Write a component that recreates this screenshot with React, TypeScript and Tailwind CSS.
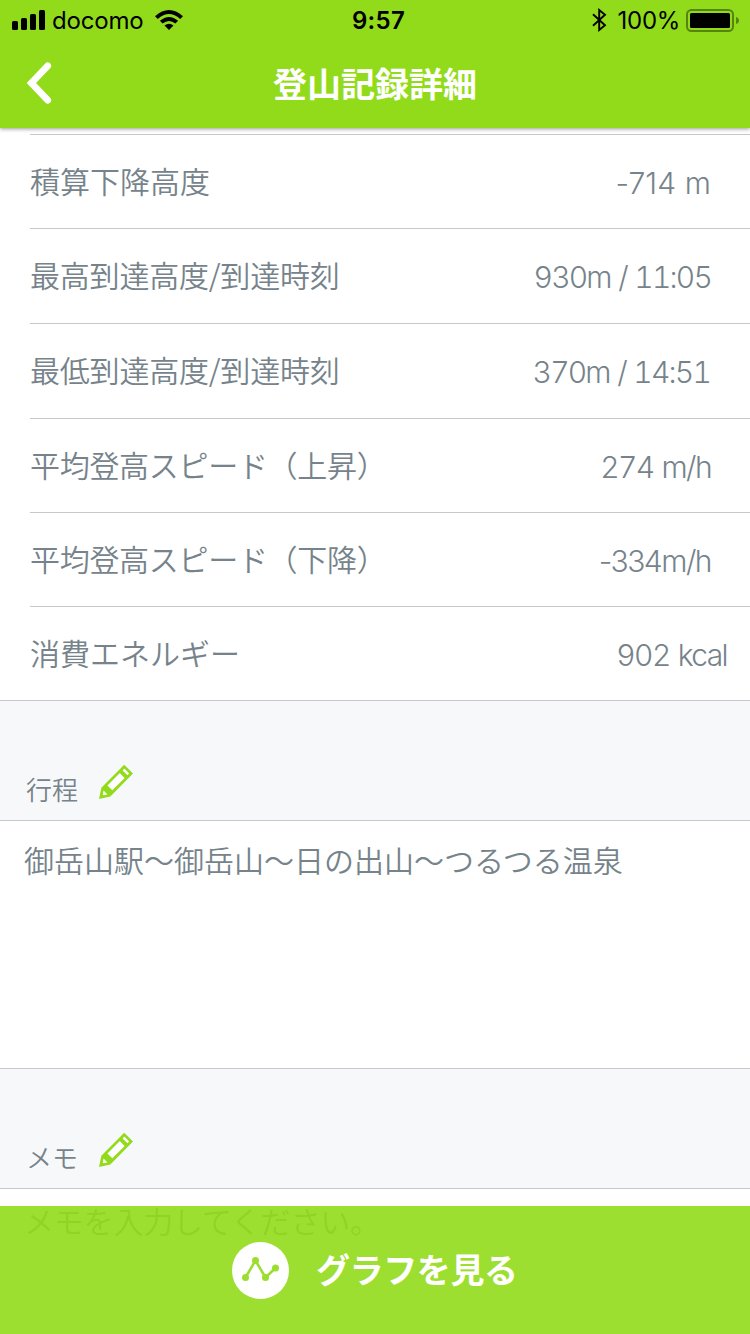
type StatRow = {
  label: string;
  value: string;
  height: string;
  inset?: string;
  tracking?: string;
  figures?: string;
};

const stats: StatRow[] = [
  {
    label: "積算下降高度",
    value: "-714 m",
    height: "h-[94px]",
    figures: "tracking-[0.1px]",
  },
  {
    label: "最高到達高度/到達時刻",
    value: "930m / 11:05",
    height: "h-[95px]",
    tracking: "tracking-[-0.2px]",
    figures: "tabular-nums tracking-[-1.8px] [word-spacing:1.2px]",
  },
  {
    label: "最低到達高度/到達時刻",
    value: "370m / 14:51",
    height: "h-[95px]",
    inset: "pr-[40px]",
    tracking: "tracking-[-0.2px]",
    figures: "tabular-nums tracking-[-1.8px] [word-spacing:1.2px]",
  },
  {
    label: "平均登高スピード（上昇）",
    value: "274 m/h",
    height: "h-[94px]",
    tracking: "tracking-[-0.3px]",
  },
  {
    label: "平均登高スピード（下降）",
    value: "-334m/h",
    height: "h-[94px]",
    tracking: "tracking-[-0.3px]",
    figures: "tracking-[-1.5px]",
  },
  {
    label: "消費エネルギー",
    value: "902 kcal",
    height: "h-[93px]",
    inset: "pr-[23px]",
  },
];

const StatusBar = () => (
  <div className="flex h-10 items-center text-black font-['Inter',sans-serif]">
    <div className="flex flex-1 items-center pl-3">
      <svg width="33" height="20" viewBox="0 0 33 20" className="shrink-0">
        <rect x="0" y="11" width="6" height="9" rx="1.5" />
        <rect x="9" y="8" width="6" height="12" rx="1.5" />
        <rect x="18" y="4" width="6" height="16" rx="1.5" />
        <rect x="27" y="0" width="6" height="20" rx="1.5" />
      </svg>
      <span className="mt-[2px] ml-[7px] text-2xl tracking-[-0.2px]">docomo</span>
      <svg width="28" height="20" viewBox="0 0 28 20" className="ml-3 shrink-0">
        <path d="M0 6.2Q14-6.2 28 6.2L25.2 9Q14-1 2.8 9Z" />
        <path d="M4.9 10.8Q14 3 23.1 10.8L20.4 13.5Q14 8.3 7.6 13.5Z" />
        <path d="M9.5 15.4Q14 12 18.5 15.4L14 20Z" />
      </svg>
    </div>
    <span className="mt-[2px] pl-[6px] text-2xl font-semibold tracking-[0.3px]">
      9:57
    </span>
    <div className="flex flex-1 items-center justify-end pr-[11px]">
      <svg
        width="15"
        height="24"
        viewBox="0 0 15 24"
        fill="none"
        stroke="black"
        strokeWidth="1.9"
        className="shrink-0"
      >
        <path d="M1 6.2L13 17.2L7.2 22V2L13 6.8L1 17.8" />
      </svg>
      <span className="mt-[2px] ml-[11px] text-2xl tracking-[-0.3px]">100%</span>
      <svg width="53" height="24" viewBox="0 0 53 24" className="ml-[6px] shrink-0">
        <rect
          x="1"
          y="2"
          width="46"
          height="21"
          rx="4.5"
          fill="none"
          stroke="black"
          strokeOpacity="0.4"
          strokeWidth="2"
        />
        <rect x="4" y="5" width="40" height="15" rx="1.5" />
        <path d="M50 9Q53 10 53 12.5T50 16Z" fillOpacity="0.4" />
      </svg>
    </div>
  </div>
);

const Header = () => (
  <header className="h-32 bg-[#92db1a] shadow-[0_1px_4px_rgba(0,0,0,0.4)]">
    <StatusBar />
    <div className="grid h-[84px] grid-cols-[120px_1fr_120px] items-center">
      <button type="button" aria-label="戻る" className="pt-[2px] pl-[26px]">
        <svg
          width="26"
          height="42"
          viewBox="0 0 26 42"
          fill="none"
          stroke="white"
          strokeWidth="6.8"
          strokeLinecap="round"
        >
          <path d="M21.7 3.8L5.4 21L21.7 38.2" />
        </svg>
      </button>
      <h1 className="text-center text-[34px] font-bold text-white">登山記録詳細</h1>
    </div>
  </header>
);

const PencilIcon = () => (
  <svg width="36" height="36" viewBox="0 0 36 36">
    <path d="M26.2 0.8L35 9.6L12.3 32.5L1 35L3.4 23.8Z" fill="#92db1a" />
    <g fill="white">
      <path d="M9.4 21.4L21.8 9L26.7 13.9L14.3 26.3Z" />
      <path d="M24.6 6.4L26.4 4.6L31.2 9.4L29.4 11.2Z" />
      <path d="M5.6 26.6L9.4 30.4L5.2 31.2L4.7 30.7Z" />
    </g>
  </svg>
);

const SectionHeader = ({ title }: { title: string }) => (
  <div className="flex h-[120px] items-end border-b border-[#c8c7cc] bg-[#f7f8fa] pl-[26px]">
    <h2 className="pb-[11px] text-[26px] leading-[40px] font-[350]">{title}</h2>
    <button type="button" aria-label={`${title}を編集`} className="mb-5 ml-5">
      <PencilIcon />
    </button>
  </div>
);

const GraphButton = () => (
  <button
    type="button"
    className="absolute inset-x-0 bottom-0 flex h-32 items-center bg-[#92db1a]/90 pl-[232px] text-white"
  >
    <svg width="57" height="57" viewBox="0 0 57 57">
      <circle cx="28.5" cy="28.5" r="28.5" fill="white" />
      <path
        d="M13.5 35.5L23.5 18.5L33.5 35.5L43.5 26"
        fill="none"
        stroke="#9cde30"
        strokeWidth="2.6"
      />
      <g fill="#9cde30">
        <circle cx="13.5" cy="35.5" r="3.5" />
        <circle cx="23.5" cy="18.5" r="3.5" />
        <circle cx="33.5" cy="35.5" r="3.5" />
        <circle cx="43.5" cy="26" r="3.5" />
      </g>
    </svg>
    <span className="mb-1 ml-[27px] text-[34px] font-bold tracking-[-0.4px]">
      グラフを見る
    </span>
  </button>
);

const App = () => {
  return (
    <div
      lang="ja"
      className="relative flex h-[1334px] w-[750px] flex-col overflow-hidden bg-white text-[#76838b] font-['Noto_Sans_CJK_JP',sans-serif]"
    >
      <Header />
      <main className="mt-[6px]">
        <div className="border-b border-[#c8c7cc]">
          <dl className="ml-[30px] border-t border-[#c8c7cc]">
            {stats.map(
              (
                {
                  label,
                  value,
                  height,
                  inset = "pr-[39px]",
                  tracking = "",
                  figures = "tabular-nums tracking-[-1.6px] [word-spacing:1.5px]",
                },
                i
              ) => (
                <div
                  key={label}
                  className={`flex items-center justify-between text-[30px] ${height} ${inset} ${
                    i < stats.length - 1 ? "border-b border-[#c8c7cc]" : ""
                  }`}
                >
                  <dt className={`mb-[3px] font-[350] ${tracking}`}>{label}</dt>
                  <dd
                    className={`mt-[3px] font-light font-['Inter',sans-serif] ${figures}`}
                  >
                    {value}
                  </dd>
                </div>
              )
            )}
          </dl>
        </div>
        <SectionHeader title="行程" />
        <p className="h-[248px] border-b border-[#c8c7cc] pt-4 pl-6 text-[30px] font-[350]">
          御岳山駅〜御岳山〜日の出山〜つるつる温泉
        </p>
        <SectionHeader title="メモ" />
        <p className="pt-[9px] pl-6 text-[30px] font-[350] tracking-[-0.2px]">
          メモを入力してください。
        </p>
      </main>
      <GraphButton />
    </div>
  );
};

export default App;
